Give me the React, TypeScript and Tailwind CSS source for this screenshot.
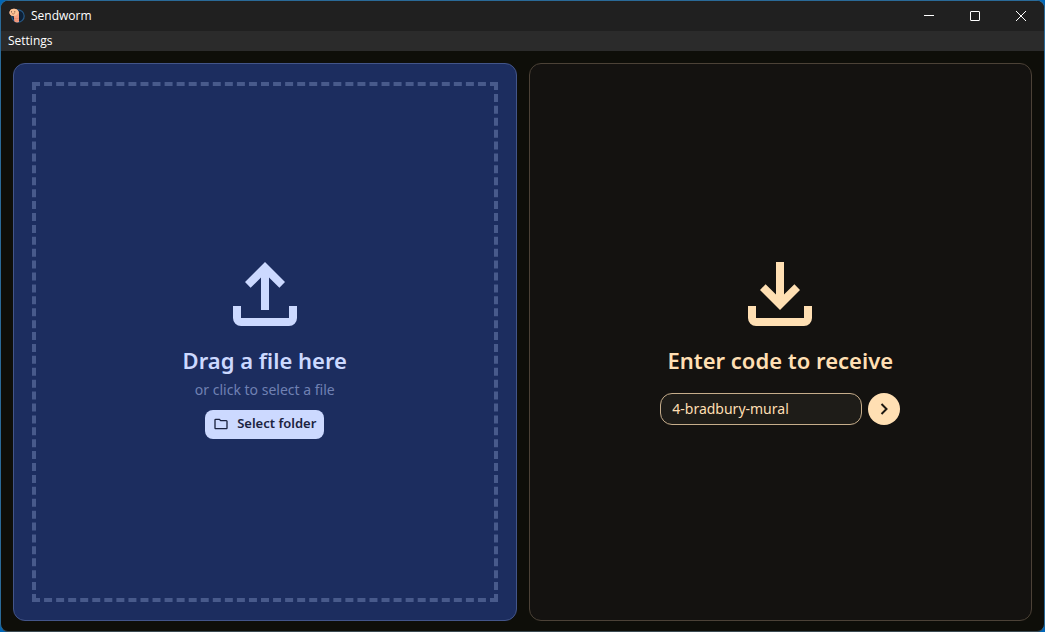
import type { ReactNode } from "react";

function WormLogo() {
  return (
    <svg viewBox="0 0 16 16" className="size-4" aria-hidden="true">
      <circle cx="9" cy="8" r="6.200" fill="#0d2036" stroke="#265783" strokeWidth="1.200" />
      <path
        d="M5 .8C2.300.8.5 2.400.5 4.600c0 2 1.500 3.400 4.200 3.400.4 2.300.3 4.700.7 5.600 1.400 1 3.200 1.200 4.600.5V5.500C10 2.500 8 .8 5 .8Z"
        fill="#f5a184"
      />
      <path d="M5 .8C2.300.8.5 2.400.5 4.600c0 2 1.500 3.400 4.200 3.400 2.400 0 4.200-1.500 5-3.800C9 2 7.300.8 5 .8Z" fill="#fbc396" />
      <path d="M5.200 10.300c1.600.6 3.200.5 4.700-.2M5.300 12.500c1.600.6 3.200.5 4.600-.2" stroke="#e07f66" strokeWidth=".7" fill="none" />
      <circle cx="2.500" cy="3.800" r=".6" fill="#5a3528" />
      <circle cx="5.800" cy="3.800" r=".6" fill="#5a3528" />
      <path d="M2.900 5.400c1 .8 2 .8 2.700 0" stroke="#8a4a38" strokeWidth=".6" fill="none" />
    </svg>
  );
}

function UploadIcon() {
  return (
    <svg viewBox="0 0 24 24" className="size-24" fill="currentColor" aria-hidden="true">
      <path d="M11 16V7.850l-2.600 2.600L7 9l5-5 5 5-1.400 1.450-2.600-2.600V16ZM6 20q-.825 0-1.412-.587Q4 18.825 4 18v-3h2v3h12v-3h2v3q0 .825-.587 1.413Q18.825 20 18 20Z" />
    </svg>
  );
}

function DownloadIcon() {
  return (
    <svg viewBox="0 0 24 24" className="size-24" fill="currentColor" aria-hidden="true">
      <path d="m12 16-5-5 1.400-1.450 2.600 2.600V4h2v8.150l2.600-2.600L17 11ZM6 20q-.825 0-1.412-.587Q4 18.825 4 18v-3h2v3h12v-3h2v3q0 .825-.587 1.413Q18.825 20 18 20Z" />
    </svg>
  );
}

function FolderIcon() {
  return (
    <svg viewBox="0 0 24 24" className="size-4" fill="currentColor" aria-hidden="true">
      <path d="M4 20q-.825 0-1.412-.587Q2 18.825 2 18V6q0-.825.588-1.412Q3.175 4 4 4h6l2 2h8q.825 0 1.413.588Q22 7.175 22 8v10q0 .825-.587 1.413Q20.825 20 20 20ZM4 6v12h16V8h-8.825l-2-2Z" />
    </svg>
  );
}

function WindowButton({ label, children }: { label: string; children: ReactNode }) {
  return (
    <button aria-label={label} className="flex h-full w-[46px] items-center justify-center hover:bg-white/10">
      <svg viewBox="0 0 12 12" className="size-3" fill="none" stroke="#fff" aria-hidden="true">
        {children}
      </svg>
    </button>
  );
}

function TitleBar() {
  return (
    <header className="flex h-[30px] items-center bg-[#202020] pl-2 text-xs text-white">
      <WormLogo />
      <h1 className="flex-1 pl-1.5">Sendworm</h1>
      <div className="flex h-full">
        <WindowButton label="Minimize">
          <path d="M1 5.500h10" />
        </WindowButton>
        <WindowButton label="Maximize">
          <rect x="1.500" y="1.500" width="9" height="9" rx=".5" />
        </WindowButton>
        <WindowButton label="Close">
          <path d="m1 1 10 10M11 1 1 11" />
        </WindowButton>
      </div>
    </header>
  );
}

function SendPanel() {
  return (
    <section className="flex rounded-xl border border-[#435589] bg-[#1c2d5f] p-[18px] text-[#ccd9ff]">
      <div className="flex flex-1 flex-col items-center justify-center border-4 border-dashed border-[#485a8b]">
        <UploadIcon />
        <h2 className="text-[22px] leading-9 font-semibold">Drag a file here</h2>
        <p className="pt-0.5 text-sm leading-5 text-[#7081b3]">or click to select a file</p>
        <button className="mt-2.5 flex h-[29px] items-center gap-2 rounded-lg bg-[#ccd9ff] px-2 text-[13px] font-semibold text-[#1b2340]">
          <FolderIcon />
          Select folder
        </button>
      </div>
    </section>
  );
}

function ReceivePanel() {
  return (
    <section className="flex flex-col items-center justify-center rounded-xl border border-[#4c4237] bg-[#141210] pb-3.5 text-[#ffdfb3]">
      <DownloadIcon />
      <h2 className="text-[22px] leading-9 font-semibold">Enter code to receive</h2>
      <form className="flex gap-1.5 pt-[15px]" onSubmit={(e) => e.preventDefault()}>
        <input
          type="text"
          aria-label="Code"
          defaultValue="4-bradbury-mural"
          className="h-8 w-[202px] rounded-xl border border-[#c6ad8b] bg-[#1e1c18] px-[11px] text-sm outline-none"
        />
        <button aria-label="Receive" className="flex size-8 items-center justify-center rounded-full bg-[#ffdfb3]">
          <svg viewBox="0 0 16 16" className="size-4" fill="none" stroke="#1b1811" strokeWidth="2" aria-hidden="true">
            <path d="m5.500 3 5 5-5 5" />
          </svg>
        </button>
      </form>
    </section>
  );
}

export default function App() {
  return (
    <div className="flex min-h-screen bg-[#0067b8] font-['Open_Sans',sans-serif]">
      <div className="flex flex-1 flex-col overflow-hidden rounded-lg border border-[#2a6a98] border-b-[#3b4a52] bg-[#0e0e09]">
        <TitleBar />
        <nav className="flex h-5 items-center bg-[#2b2b2b] px-[7px] text-xs text-white">
          <button>Settings</button>
        </nav>
        <main className="grid flex-1 grid-cols-2 gap-3 px-3 pt-3 pb-2.5 font-['Noto_Sans',sans-serif]">
          <SendPanel />
          <ReceivePanel />
        </main>
      </div>
    </div>
  );
}
